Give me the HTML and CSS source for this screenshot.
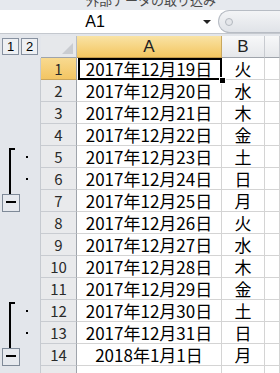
FILE: index.html
```html
<!DOCTYPE html>
<html lang="ja">
<head>
<meta charset="utf-8">
<link rel="stylesheet" href="styles.css">
</head>
<body>
<div class="title"><span>外部データの取り込み</span></div>
<div class="namebar">
  <div class="namebox">
    <div class="ref">A1</div>
    <div class="drop"><span class="tri"></span></div>
  </div>
  <div class="pill"><span class="knob"></span></div>
</div>
<div class="strip"></div>
<div class="sheet">
  <div class="olhead"><span class="ob">1</span><span class="ob">2</span></div>
  <div class="corner"><svg width="11" height="11" viewBox="0 0 11 11"><polygon points="11,0 11,11 0,11" fill="#c9ccd1"/></svg></div>
  <div class="ch sel">A</div>
  <div class="ch">B</div>
  <div class="ch"></div>

  <div class="outline">
    <svg width="41" height="330" viewBox="0 0 41 330">
      <path d="M15 91 H10 V136" fill="none" stroke="#000" stroke-width="2"/>
      <rect x="26" y="98" width="2" height="2" fill="#000"/>
      <rect x="26" y="120" width="2" height="2" fill="#000"/>
      <rect x="2.5" y="136.5" width="17" height="17" fill="#e6e9ee" stroke="#7f8a98"/>
      <rect x="6" y="143" width="10" height="2" fill="#000"/>
      <path d="M15 245 H10 V290" fill="none" stroke="#000" stroke-width="2"/>
      <rect x="26" y="252" width="2" height="2" fill="#000"/>
      <rect x="26" y="274" width="2" height="2" fill="#000"/>
      <rect x="2.5" y="290.5" width="17" height="17" fill="#e6e9ee" stroke="#7f8a98"/>
      <rect x="6" y="297" width="10" height="2" fill="#000"/>
    </svg>
  </div>

  <div class="rh sel">1</div><div class="c active">2017年12月19日</div><div class="c">火</div><div class="c"></div>
  <div class="rh">2</div><div class="c">2017年12月20日</div><div class="c">水</div><div class="c"></div>
  <div class="rh">3</div><div class="c">2017年12月21日</div><div class="c">木</div><div class="c"></div>
  <div class="rh">4</div><div class="c">2017年12月22日</div><div class="c">金</div><div class="c"></div>
  <div class="rh">5</div><div class="c">2017年12月23日</div><div class="c">土</div><div class="c"></div>
  <div class="rh">6</div><div class="c">2017年12月24日</div><div class="c">日</div><div class="c"></div>
  <div class="rh">7</div><div class="c">2017年12月25日</div><div class="c">月</div><div class="c"></div>
  <div class="rh">8</div><div class="c">2017年12月26日</div><div class="c">火</div><div class="c"></div>
  <div class="rh">9</div><div class="c">2017年12月27日</div><div class="c">水</div><div class="c"></div>
  <div class="rh">10</div><div class="c">2017年12月28日</div><div class="c">木</div><div class="c"></div>
  <div class="rh">11</div><div class="c">2017年12月29日</div><div class="c">金</div><div class="c"></div>
  <div class="rh">12</div><div class="c">2017年12月30日</div><div class="c">土</div><div class="c"></div>
  <div class="rh">13</div><div class="c">2017年12月31日</div><div class="c">日</div><div class="c"></div>
  <div class="rh">14</div><div class="c">2018年1月1日</div><div class="c">月</div><div class="c"></div>
  <div class="rh"></div><div class="c"></div><div class="c"></div><div class="c"></div>
</div>
</body>
</html>
```

FILE: styles.css
```css
* { box-sizing: border-box; }

body {
  margin: 0;
  width: 280px;
  height: 373px;
  overflow: hidden;
  background: #e3e6eb;
  font-family: "Noto Sans CJK JP", sans-serif;
  color: #000;
}

.title {
  height: 10px;
  overflow: hidden;
  background: #e6e9ee;
  text-align: center;
  padding-left: 22px;
}
.title span {
  display: block;
  font-size: 13px;
  line-height: 16px;
  margin-top: -8px;
  color: #4a4a4a;
}

.namebar {
  display: flex;
  height: 24px;
  background: #fff;
  border-bottom: 1px solid #c4c8ce;
}

.namebox {
  width: 218px;
  display: flex;
  background: #fff;
}
.ref {
  width: 190px;
  display: flex;
  align-items: center;
  justify-content: center;
  font-family: "Liberation Sans", sans-serif;
  font-size: 16px;
}
.drop {
  flex: 1;
  display: flex;
  align-items: center;
  justify-content: center;
  padding-left: 6px;
}
.tri {
  width: 0;
  height: 0;
  border-left: 4px solid transparent;
  border-right: 4px solid transparent;
  border-top: 4px solid #222;
}

.pill {
  flex: 1;
  display: flex;
  align-items: center;
  padding-left: 6px;
  border: 1px solid #b7bcc4;
  border-right: none;
  border-radius: 12px 0 0 12px;
  background: linear-gradient(#f3f4f6, #e0e3e8);
}
.knob {
  width: 8px;
  height: 8px;
  border-radius: 50%;
  border: 1px solid #b3b8bf;
  background: #e4e6ea;
}

.strip {
  height: 2px;
  background: #e3e6eb;
}

.sheet {
  display: grid;
  grid-template-columns: 41px 36px 145px 43px 1fr;
  grid-auto-rows: 22px;
}

.olhead {
  display: flex;
  gap: 2px;
  padding: 2px 0 0 2px;
  background: #e3e6eb;
}
.ob {
  width: 17px;
  height: 17px;
  border: 1px solid #8791a0;
  background: #eef0f3;
  font-family: "Liberation Sans", sans-serif;
  font-size: 13px;
  display: flex;
  align-items: center;
  justify-content: center;
}

.corner {
  display: flex;
  align-items: flex-end;
  justify-content: flex-end;
  padding: 0 3px 3px 0;
  background: #e6e8eb;
  border-right: 1px solid #b9bdc3;
  border-bottom: 1px solid #9fa4ab;
}

.ch {
  display: flex;
  align-items: center;
  justify-content: center;
  font-family: "Liberation Sans", sans-serif;
  font-size: 17px;
  color: #222;
  background: linear-gradient(#f7f8f9, #e6e8eb);
  border-right: 1px solid #c8cbd0;
  border-bottom: 1px solid #9fa4ab;
}
.ch.sel {
  background: linear-gradient(#f9e3a5, #f3c660);
  border-right-color: #c9a85e;
  border-bottom-color: #c29a4a;
}

.outline {
  grid-column: 1;
  grid-row: 2 / span 15;
  background: #e3e6eb;
  border-right: 1px solid #c6cad0;
}
.outline svg { display: block; }

.rh {
  display: flex;
  align-items: center;
  justify-content: center;
  font-family: "Noto Sans CJK JP", sans-serif;
  font-size: 15px;
  color: #2a2a2a;
  background: #e9eaec;
  border-right: 1px solid #9fa4ab;
  border-bottom: 1px solid #c9ccd1;
}
.rh.sel {
  background: linear-gradient(#f8da90, #f3c563);
  border-bottom-color: #c9a55c;
}

.c {
  display: flex;
  align-items: center;
  justify-content: center;
  font-size: 17px;
  line-height: 21px;
  background: #fff;
  border-right: 1px solid #d4d4d4;
  border-bottom: 1px solid #d4d4d4;
  white-space: nowrap;
}

.c.active { position: relative; }
.c.active::after {
  content: "";
  position: absolute;
  top: 0;
  left: 1px;
  right: -1px;
  bottom: -1px;
  border: 2px solid #000;
}
.c.active::before {
  content: "";
  position: absolute;
  right: -4px;
  bottom: -4px;
  width: 5px;
  height: 5px;
  background: #000;
  outline: 1px solid #fff;
  z-index: 1;
}
```
